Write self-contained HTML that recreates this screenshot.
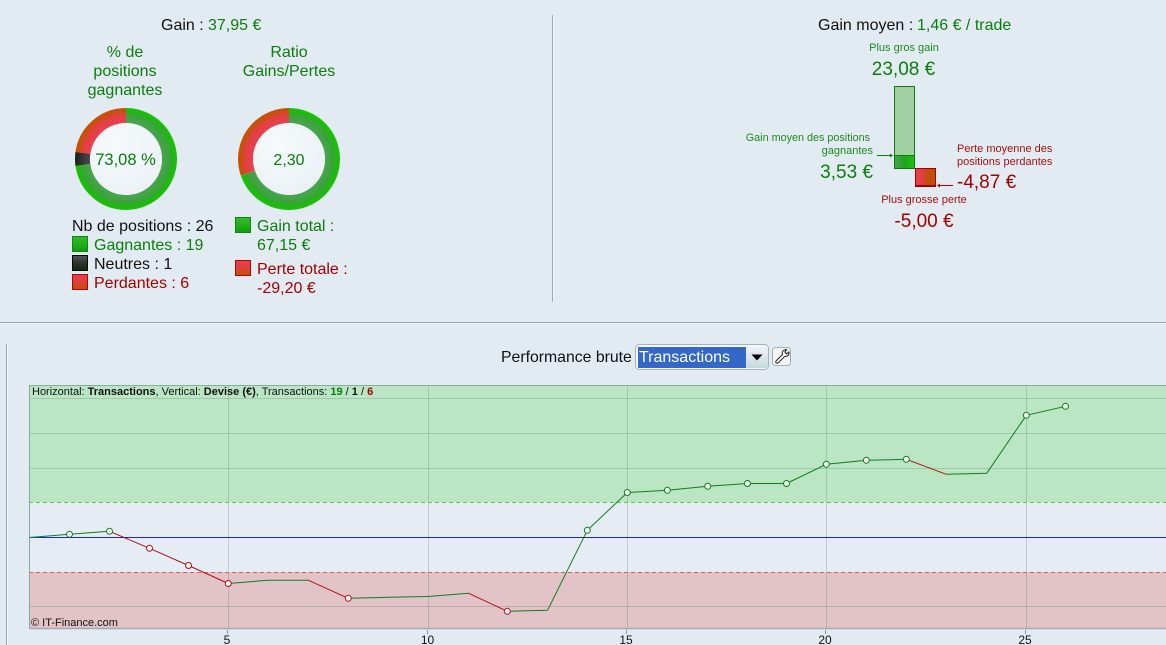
<!DOCTYPE html>
<html>
<head>
<meta charset="utf-8">
<title>Performance</title>
<style>
html,body{margin:0;padding:0;background:#e3ebf2;overflow:hidden}
svg{display:block;font-family:"Liberation Sans",sans-serif;font-size:16px}
.g{fill:#0a7d0a}.r{fill:#a30000}.k{fill:#111}
.s{font-size:11px}.g2{fill:#1c8a1c}.r2{fill:#a81010}
.b{font-size:19px}
.m{text-anchor:middle}.e{text-anchor:end}
.c{font-size:11px;fill:#111}
</style>
</head>
<body>
<svg width="1166" height="645" viewBox="0 0 1166 645" xmlns="http://www.w3.org/2000/svg">
<defs>
<radialGradient id="rg" gradientUnits="userSpaceOnUse" cx="0" cy="0" r="51"><stop offset=".7" stop-color="#4aa450"/><stop offset=".87" stop-color="#38a438"/><stop offset=".93" stop-color="#1cba0c"/><stop offset="1" stop-color="#1cc00a"/></radialGradient>
<radialGradient id="rr" gradientUnits="userSpaceOnUse" cx="0" cy="0" r="51"><stop offset=".7" stop-color="#ea3f50"/><stop offset=".87" stop-color="#e04040"/><stop offset=".93" stop-color="#c8500c"/><stop offset="1" stop-color="#c25406"/></radialGradient>
<radialGradient id="rn" gradientUnits="userSpaceOnUse" cx="0" cy="0" r="51"><stop offset=".7" stop-color="#4a4a4a"/><stop offset=".87" stop-color="#333"/><stop offset="1" stop-color="#12240f"/></radialGradient>
<radialGradient id="ci" cx=".35" cy=".3" r=".8"><stop offset="0" stop-color="#f6fafc"/><stop offset="1" stop-color="#eaf0f5"/></radialGradient>
<linearGradient id="sg" x1="0" y1="0" x2="0" y2="1"><stop offset="0" stop-color="#34b834"/><stop offset=".5" stop-color="#22b018"/><stop offset="1" stop-color="#0e980e"/></linearGradient>
<linearGradient id="sn" x1="0" y1="0" x2="0" y2="1"><stop offset="0" stop-color="#565656"/><stop offset=".5" stop-color="#2e332c"/><stop offset="1" stop-color="#10280a"/></linearGradient>
<linearGradient id="sr" x1="0" y1="0" x2="0" y2="1"><stop offset="0" stop-color="#ea3f4c"/><stop offset=".55" stop-color="#dc4038"/><stop offset="1" stop-color="#c05408"/></linearGradient>
<linearGradient id="hg" x1="0" y1="0" x2="1" y2="0"><stop offset="0" stop-color="#4aa450"/><stop offset=".5" stop-color="#1fa51f"/><stop offset="1" stop-color="#18c408"/></linearGradient>
<linearGradient id="hr" x1="0" y1="0" x2="1" y2="0"><stop offset="0" stop-color="#ea3f50"/><stop offset=".45" stop-color="#d84038"/><stop offset=".55" stop-color="#c44c10"/><stop offset="1" stop-color="#c05006"/></linearGradient>
<linearGradient id="sel" x1="0" y1="0" x2="0" y2="1"><stop offset="0" stop-color="#eef3f5"/><stop offset="1" stop-color="#c5dade"/></linearGradient>
</defs>

<!-- separators -->
<rect x="552" y="15" width="1" height="287" fill="#9aabaa"/>
<rect x="553" y="15" width="1" height="287" fill="#f2f6f9"/>
<rect x="0" y="322" width="1166" height="1" fill="#93a6a8"/>
<rect x="0" y="323" width="1166" height="1" fill="#f4f7fa"/>
<rect x="6" y="344" width="1" height="301" fill="#98a8ac"/>
<rect x="7" y="344" width="1" height="301" fill="#f4f7fa"/>

<!-- Left summary -->
<text x="161" y="30" class="k">Gain :</text>
<text x="208" y="30" class="g">37,95 €</text>
<text x="125" y="57" class="g m">% de</text>
<text x="125" y="76" class="g m">positions</text>
<text x="125" y="95" class="g m">gagnantes</text>
<text x="289" y="57" class="g m">Ratio</text>
<text x="289" y="76" class="g m">Gains/Pertes</text>

<g transform="translate(126,159) rotate(-90)" fill="none" stroke-width="15">
<circle r="43.5" pathLength="360" stroke="url(#rg)" stroke-dasharray="263.1 96.9"/>
<circle r="43.5" pathLength="360" stroke="url(#rr)" stroke-dasharray="83.1 276.9" stroke-dashoffset="-276.9"/>
<circle r="43.5" pathLength="360" stroke="url(#rn)" stroke-dasharray="15.500 344.500" stroke-dashoffset="-262.300"/>
</g>
<circle cx="126" cy="159" r="36" fill="url(#ci)"/>
<text x="125.500" y="165" class="g m" font-size="16.500">73,08 %</text>

<g transform="translate(289,159) rotate(-90)" fill="none" stroke-width="15">
<circle r="43.5" pathLength="360" stroke="url(#rg)" stroke-dasharray="251 109"/>
<circle r="43.5" pathLength="360" stroke="url(#rr)" stroke-dasharray="109 251" stroke-dashoffset="-251"/>
</g>
<circle cx="289" cy="159" r="36" fill="url(#ci)"/>
<text x="289" y="165" class="g m">2,30</text>

<text x="72" y="231" class="k">Nb de positions : 26</text>
<rect x="72.500" y="236.500" width="15" height="15" fill="url(#sg)" stroke="#0a8a0a"/>
<text x="94" y="250" class="g">Gagnantes : 19</text>
<rect x="72.500" y="255.500" width="15" height="15" fill="url(#sn)" stroke="#0a0a0a"/>
<text x="94" y="269" class="k">Neutres : 1</text>
<rect x="72.500" y="274.500" width="15" height="15" fill="url(#sr)" stroke="#a80808"/>
<text x="94" y="288" class="r">Perdantes : 6</text>

<rect x="235.500" y="217.500" width="15" height="15" fill="url(#sg)" stroke="#0a8a0a"/>
<text x="257" y="231" class="g">Gain total :</text>
<text x="257" y="250" class="g">67,15 €</text>
<rect x="235.500" y="260.500" width="15" height="15" fill="url(#sr)" stroke="#a80808"/>
<text x="257" y="274" class="r">Perte totale :</text>
<text x="257" y="293" class="r">-29,20 €</text>

<!-- Right summary -->
<text x="818" y="30" class="k">Gain moyen :</text>
<text x="917" y="30" class="g">1,46 € / trade</text>
<text x="904" y="51" class="s g2 m">Plus gros gain</text>
<text x="903.500" y="75" class="b g m">23,08 €</text>
<rect x="894.500" y="86.500" width="20" height="69" fill="#a2d0a4" stroke="#0a7d0a"/>
<rect x="894.500" y="155.500" width="20" height="13" fill="url(#hg)" stroke="#0a7d0a"/>
<rect x="915.500" y="168.500" width="20" height="17" fill="url(#hr)" stroke="#a30000"/>
<rect x="915" y="185" width="21" height="2" fill="#a30000"/>
<path d="M877 155.500H891" stroke="#0a7d0a" fill="none"/><path d="M893 155.500l-3-2v4z" fill="#0a7d0a"/>
<path d="M939 185.500H953" stroke="#a30000" fill="none"/><path d="M937 185.500l3-2v4z" fill="#a30000"/>
<text x="870" y="141" class="s g2 e" font-size="10.800" style="font-size:10.800px">Gain moyen des positions</text>
<text x="873" y="154" class="s g2 e">gagnantes</text>
<text x="873" y="178" class="b g e">3,53 €</text>
<text x="957" y="152" class="s r2">Perte moyenne des</text>
<text x="957" y="165" class="s r2">positions perdantes</text>
<text x="957" y="188" class="b r">-4,87 €</text>
<text x="924" y="203" class="s r2 m">Plus grosse perte</text>
<text x="924" y="227" class="b r m">-5,00 €</text>

<!-- Control row -->
<text x="501" y="362" class="k" style="font-size:15.800px">Performance brute</text>
<rect x="635.500" y="344.500" width="133" height="25" rx="4" fill="#f4f7f9" stroke="#a8b2b8"/>
<rect x="638" y="347" width="130" height="21" fill="url(#sel)"/>
<rect x="638" y="347" width="108" height="21" fill="#3368c8"/>
<text x="639" y="362" fill="#fff">Transactions</text>
<path d="M751.500 354.500h11l-5.500 6z" fill="#000"/>
<rect x="772.500" y="347.500" width="18" height="18" rx="3" fill="#f3f5f7" stroke="#a5aeb3"/>
<path d="M776 361L782.500 354.500C781.500 351.500 783.500 349.500 786.800 349.600L784.800 352L786.600 354L788.900 351.800C789.500 354.800 787.600 356.800 784.800 356.300L778 363Q776.300 363.500 775.700 362.300Z" fill="#fff" stroke="#222" stroke-width="1" stroke-linejoin="round"/>

<!-- Chart -->
<rect x="29" y="385" width="1137" height="243" fill="#e5ecf4"/>
<rect x="29" y="385" width="1137" height="117" fill="#bae6c4"/>
<rect x="29" y="572" width="1137" height="56" fill="#e2c4c8"/>
<g stroke="#6f8f80" stroke-opacity=".35" fill="none">
<path d="M29 398.500H1166M29 433.500H1166M29 468.500H1166M29 606.500H1166"/>
<path d="M228.500 385V628M428.500 385V628M627.500 385V628M826.500 385V628M1026.500 385V628"/>
</g>
<path d="M29 502.500H1166" stroke="#55c455" stroke-dasharray="4 3" fill="none"/>
<path d="M29 572.500H1166" stroke="#d06060" stroke-dasharray="4 3" fill="none"/>
<path d="M29 537.500H1166" stroke="#2222cc" fill="none"/>
<path d="M29 385.500H1166" stroke="#85ae97" fill="none"/>
<path d="M29.500 385V628" stroke="#8aa5a5" fill="none"/>
<path d="M29 628.500H1166" stroke="#a6a8b0" stroke-width="1.500" fill="none"/>
<path d="M227.500 630v4M427.500 630v4M626.500 630v4M825.500 630v4M1025.500 630v4" stroke="#999" fill="none"/>
<g style="font-size:12px" fill="#111" text-anchor="middle">
<text x="227" y="644">5</text>
<text x="427.500" y="644">10</text>
<text x="626" y="644">15</text>
<text x="825" y="644">20</text>
<text x="1025" y="644">25</text>
</g>

<g fill="none" stroke-width="1" stroke-linejoin="round">
<path stroke="#0e7e1a" d="M29.500 537.500L69.500 534.300L109.500 531.300"/>
<path stroke="#b01018" d="M109.500 531.300L149.500 548.300L188.500 565.500L228.300 583.500"/>
<path stroke="#0e7e1a" d="M228.300 583.500L268 580.300L308.500 580.300"/>
<path stroke="#b01018" d="M308.500 580.300L348.300 598.300"/>
<path stroke="#0e7e1a" d="M348.300 598.300L388 597.300L428 596.500L468.700 593.300"/>
<path stroke="#b01018" d="M468.700 593.300L507.300 611.300"/>
<path stroke="#0e7e1a" d="M507.300 611.300L547.500 610.300L587.300 530.300L627.300 492.500L667.300 490.300L707.700 486.300L747.500 483.500L786.500 483.500L826.300 464.300L866.300 460.300L906.300 459.300"/>
<path stroke="#b01018" d="M906.300 459.300L946.300 474.300"/>
<path stroke="#0e7e1a" d="M946.300 474.300L986.700 473.300L1026.300 415.300L1065.500 406.300"/>
</g>
<g fill="#f4f8f6" stroke="#0e7e1a" stroke-width="1">
<circle cx="69.500" cy="534.300" r="3"/><circle cx="109.500" cy="531.300" r="3"/>
<circle cx="587.300" cy="530.300" r="3"/><circle cx="627.300" cy="492.500" r="3"/><circle cx="667.300" cy="490.300" r="3"/>
<circle cx="707.700" cy="486.300" r="3"/><circle cx="747.500" cy="483.500" r="3"/><circle cx="786.500" cy="483.500" r="3"/>
<circle cx="826.300" cy="464.300" r="3"/><circle cx="866.300" cy="460.300" r="3"/><circle cx="906.300" cy="459.300" r="3"/>
<circle cx="1026.300" cy="415.300" r="3"/><circle cx="1065.500" cy="406.300" r="3"/>
</g>
<g fill="#f8f4f4" stroke="#b01018" stroke-width="1">
<circle cx="149.500" cy="548.300" r="3"/><circle cx="188.500" cy="565.500" r="3"/><circle cx="228.300" cy="583.500" r="3"/>
<circle cx="348.300" cy="598.300" r="3"/><circle cx="507.300" cy="611.300" r="3"/>
</g>
<text x="32" y="395" class="c">Horizontal: <tspan font-weight="bold">Transactions</tspan>, Vertical: <tspan font-weight="bold">Devise (€)</tspan>, Transactions: <tspan font-weight="bold" fill="#0a7d0a">19</tspan> / <tspan font-weight="bold">1</tspan> / <tspan font-weight="bold" fill="#a30000">6</tspan></text>
<text x="31" y="626" class="c">© IT-Finance.com</text>
</svg>
</body>
</html>
